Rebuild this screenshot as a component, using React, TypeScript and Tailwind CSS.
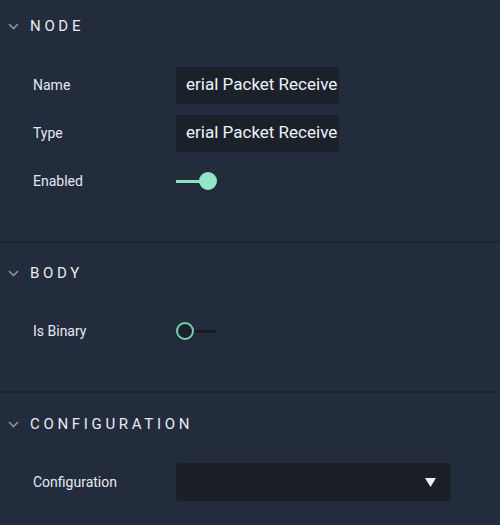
import React from "react";

const font = { fontFamily: "Roboto, 'Noto Sans', sans-serif" };

// 折叠面板标题
const Header = ({ title }: { title: string }) => (
  <div className="flex items-center h-[50px] pl-[8px]">
    <svg width="11" height="7" viewBox="0 0 11 7" className="mr-[11px]">
      <path d="M1 1l4.5 4.5L10 1" fill="none" stroke="#8a93a3" strokeWidth="1.6" />
    </svg>
    <span className="text-[15px] tracking-[0.245em] text-[#e6ebf2]">{title}</span>
  </div>
);

const Row = ({ label, children }: { label: string; children: React.ReactNode }) => (
  <div className="flex items-center h-[48px]">
    <div className="w-[176px] pl-[33px] text-[14px] text-[#e4e9f1]">{label}</div>
    {children}
  </div>
);

const TextField = ({ value }: { value: string }) => (
  <div className="w-[163px] h-[37px] bg-[#1b212b] rounded-[2px] overflow-hidden flex items-center pl-[10px] pr-[1px]">
    <div className="overflow-hidden">
      <span className="block whitespace-nowrap text-[17px] text-[#eef2f7] ml-[-10px]">{value}</span>
    </div>
  </div>
);

const Toggle = ({ on }: { on: boolean }) =>
  on ? (
    <div className="relative w-[42px] h-[20px] flex items-center">
      <div className="w-[26px] h-[3px] bg-[#8fe3c2]" />
      <div className="absolute left-[23px] top-[1px] w-[18px] h-[18px] rounded-full bg-[#93e6c5]" />
    </div>
  ) : (
    <div className="relative w-[42px] h-[20px] flex items-center">
      <div className="ml-[16px] w-[24px] h-[3px] bg-[#161b24]" />
      <div className="absolute left-0 top-[1px] w-[18px] h-[18px] rounded-full border-2 border-[#72d1ab] bg-[#1b212b]" />
    </div>
  );

export default function App() {
  return (
    <div className="w-[500px] h-[525px] bg-[#232c3c] overflow-hidden" style={font}>
      {/* NODE */}
      <div className="h-[241px] pt-[1px]">
        <Header title="NODE" />
        <div className="pt-[10px]">
          <Row label="Name">
            <TextField value="Serial Packet Receiver" />
          </Row>
          <Row label="Type">
            <TextField value="Serial Packet Receiver" />
          </Row>
          <Row label="Enabled">
            <Toggle on />
          </Row>
        </div>
      </div>
      <div className="h-[2px] bg-[#1d2431]" />
      {/* BODY */}
      <div className="h-[148px] pt-[5px]">
        <Header title="BODY" />
        <div className="pt-[9px]">
          <Row label="Is Binary">
            <Toggle on={false} />
          </Row>
        </div>
      </div>
      <div className="h-[2px] bg-[#1d2431]" />
      {/* CONFIGURATION */}
      <div className="pt-[6px]">
        <Header title="CONFIGURATION" />
        <div className="pt-[9px]">
          <Row label="Configuration">
            <div className="w-[275px] h-[38px] bg-[#1b1f28] rounded-[3px] flex items-center justify-end pr-[15px]">
              <svg width="11" height="9" viewBox="0 0 11 9">
                <path d="M0 0h11L5.5 9z" fill="#eef0f6" />
              </svg>
            </div>
          </Row>
        </div>
      </div>
    </div>
  );
}
